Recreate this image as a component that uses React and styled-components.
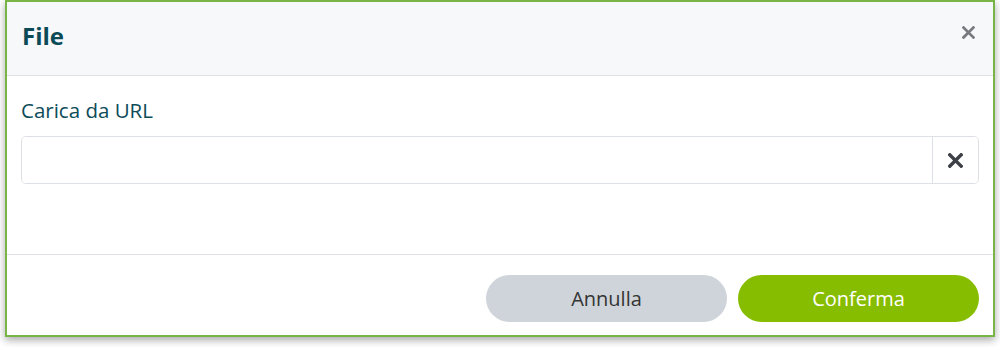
import React from "react";
import styled, { createGlobalStyle } from "styled-components";

const Global = createGlobalStyle`
  html, body { margin: 0; padding: 0; background: #ffffff; }
  body { font-family: "Open Sans", "Noto Sans", sans-serif; }
  * { box-sizing: border-box; }
`;

const Page = styled.div`
  width: 1000px;
  height: 347px;
  padding: 0 5px 0 5px;
  overflow: hidden;
`;

const Modal = styled.div`
  width: 990px;
  height: 337px;
  border: 2px solid #78b446;
  background: #ffffff;
  box-shadow: 0 3px 8px rgba(0, 0, 0, 0.35);
  display: flex;
  flex-direction: column;
`;

const Header = styled.div`
  height: 74px;
  flex: none;
  background: #f7f8fa;
  border-bottom: 1px solid #dfe2e7;
  display: flex;
  align-items: center;
  justify-content: space-between;
  padding: 0 18px 0 15px;
`;

const Title = styled.h2`
  margin: 0;
  font-size: 24px;
  font-weight: 700;
  color: #0b4b58;
  line-height: 1;
  padding-bottom: 5px;
`;

const CloseButton = styled.button`
  border: 0;
  background: none;
  padding: 0;
  display: flex;
  color: #777a7e;
  cursor: pointer;
  margin-bottom: 12px;
`;

const Body = styled.div`
  flex: 1;
  padding: 22px 14px 0 14px;
  border-bottom: 1px solid #dfe2e7;
`;

const Label = styled.label`
  display: block;
  font-size: 20.5px;
  font-weight: 400;
  line-height: 25px;
  color: #0c4b58;
  margin-bottom: 13px;
`;

const InputGroup = styled.div`
  display: flex;
  height: 48px;
  border: 1px solid #dde0e5;
  border-radius: 5px;
  overflow: hidden;
`;

const Input = styled.input`
  flex: 1;
  border: 0;
  outline: none;
  padding: 0 12px;
  font-family: inherit;
  font-size: 18px;
  background: #fff;
`;

const ClearButton = styled.button`
  width: 46px;
  border: 0;
  border-left: 1px solid #dde0e5;
  background: #fff;
  display: flex;
  align-items: center;
  justify-content: center;
  color: #3d4046;
  padding: 0;
`;

const Footer = styled.div`
  height: 80px;
  flex: none;
  display: flex;
  justify-content: flex-end;
  align-items: flex-start;
  gap: 11px;
  padding: 20px 14px 0 14px;
`;

const Button = styled.button`
  width: 241px;
  height: 47px;
  border: 0;
  border-radius: 24px;
  font-family: inherit;
  font-size: 20px;
  background: ${(p) => (p.$primary ? "#87bd00" : "#cfd4da")};
  color: ${(p) => (p.$primary ? "#ffffff" : "#343434")};
  cursor: pointer;
`;

const XIcon = ({ size, stroke }) => (
  <svg width={size} height={size} viewBox="0 0 12 12">
    <path d="M1.5 1.5 L10.5 10.5 M10.5 1.5 L1.5 10.5" stroke="currentColor" strokeWidth={stroke} strokeLinecap="square" />
  </svg>
);

export default function App() {
  return (
    <>
      <Global />
      <Page>
        <Modal>
          <Header>
            <Title>File</Title>
            <CloseButton aria-label="Chiudi">
              <XIcon size={13} stroke={2.6} />
            </CloseButton>
          </Header>
          <Body>
            <Label>Carica da URL</Label>
            <InputGroup>
              <Input type="text" />
              <ClearButton aria-label="Cancella">
                <XIcon size={15} stroke={2.8} />
              </ClearButton>
            </InputGroup>
          </Body>
          <Footer>
            <Button>Annulla</Button>
            <Button $primary>Conferma</Button>
          </Footer>
        </Modal>
      </Page>
    </>
  );
}
